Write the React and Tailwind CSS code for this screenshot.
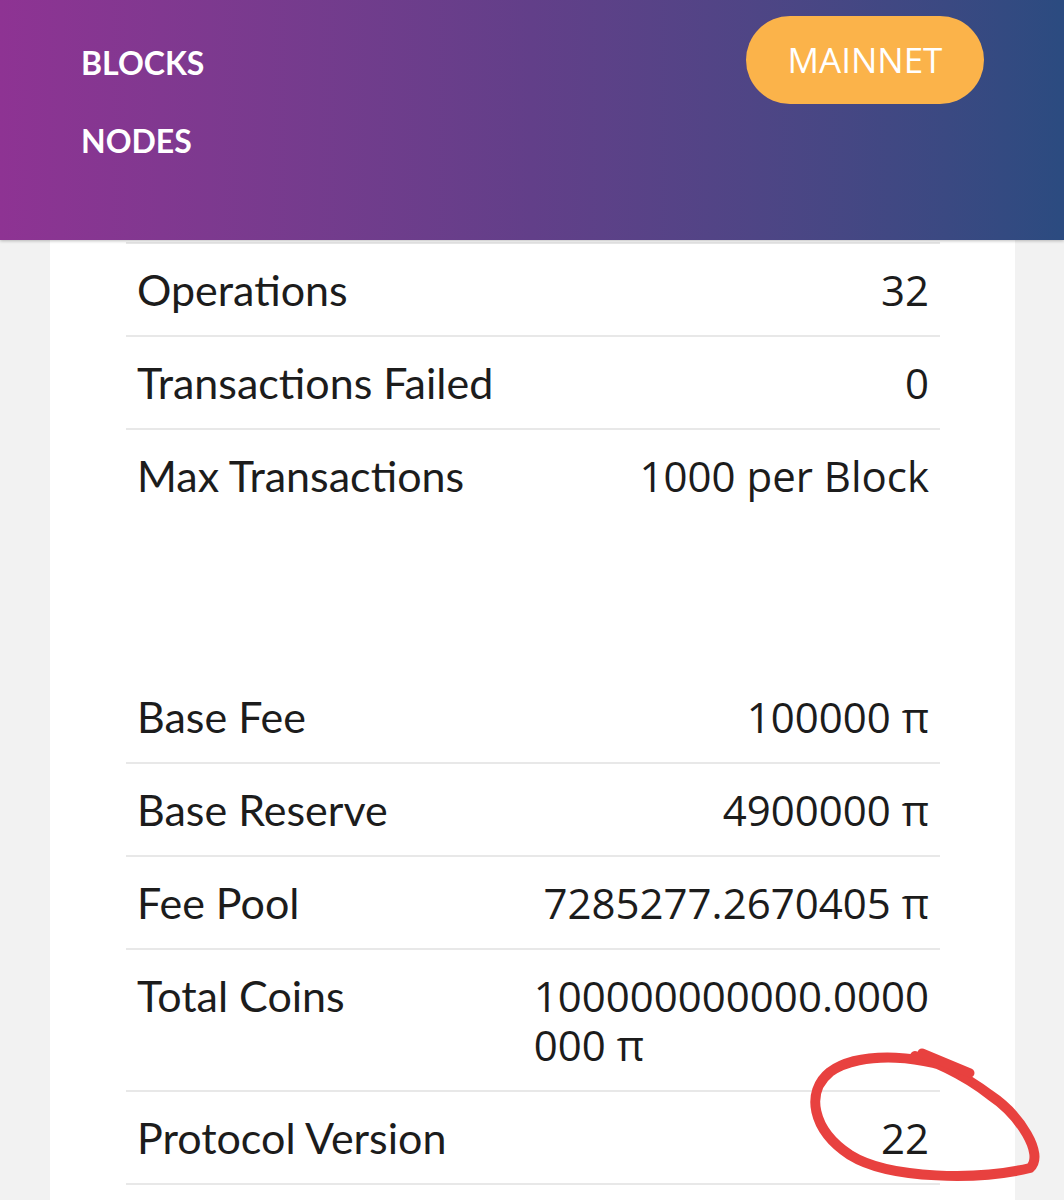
import React from 'react';

const rows = [
  { label: 'Operations', value: '32' },
  { label: 'Transactions Failed', value: '0' },
  { label: 'Max Transactions', value: '1000 per Block', tall: true },
  { label: 'Base Fee', value: '100000 π' },
  { label: 'Base Reserve', value: '4900000 π' },
  { label: 'Fee Pool', value: '7285277.2670405 π' },
  { label: 'Total Coins', value: ['100000000000.0000', '000 π'] },
  { label: 'Protocol Version', value: '22' },
];

function StatRow({ label, value, tall }) {
  return (
    <div
      className={`flex justify-between items-start px-[11px] pt-[21px] ${
        tall ? 'pb-[171px]' : 'pb-[21px] border-b-2 border-[#e8e8e8]'
      }`}
    >
      <div className="font-['Lato',sans-serif] text-[43px] leading-[49px] text-[#1c1c1c]">{label}</div>
      <div className="max-w-[50%] text-left font-['Open_Sans',sans-serif] text-[42px] leading-[49px] text-[#1c1c1c]">
        {Array.isArray(value) ? value.map((v) => <div key={v}>{v}</div>) : value}
      </div>
    </div>
  );
}

export default function App() {
  return (
    <div className="relative w-full h-[1200px] overflow-hidden bg-[#f2f2f2]">
      <header className="relative z-10 h-[240px] bg-linear-to-r from-[#8e3393] via-[#623f89] to-[#2b4b80] shadow-[0_1px_3px_rgba(0,0,0,0.25)] flex justify-between pl-[81px] pr-[80px]">
        <nav className="flex flex-col gap-[44px] pt-[46px] font-['Lato',sans-serif] font-bold text-[32px] leading-[34px] text-white">
          <span>BLOCKS</span>
          <span>NODES</span>
        </nav>
        <div className="pt-[16px]">
          <button className="h-[88px] w-[238px] rounded-full bg-[#fbb34a] text-white font-['Open_Sans',sans-serif] text-[35px]">
            MAINNET
          </button>
        </div>
      </header>

      <main className="ml-[50px] w-[965px] h-[960px] bg-white pl-[76px] pr-[75px] pt-[2px]">
        <div className="border-t-2 border-[#e8e8e8]">
          {rows.map((r) => (
            <StatRow key={r.label} {...r} />
          ))}
        </div>
      </main>

      <svg className="absolute left-[770px] top-[1030px] pointer-events-none" width="294" height="170" viewBox="0 0 294 170" fill="none">
        <path
          d="M195 45 C 160 25, 90 20, 60 42 C 35 62, 42 100, 80 125 C 120 150, 210 150, 260 138 C 275 125, 250 85, 220 65 C 190 42, 160 30, 145 26"
          stroke="#e8413f"
          strokeWidth="10"
          strokeLinecap="round"
          strokeLinejoin="round"
        />
        <path d="M152 23 L 200 43" stroke="#e8413f" strokeWidth="9" strokeLinecap="round" />
      </svg>
    </div>
  );
}
